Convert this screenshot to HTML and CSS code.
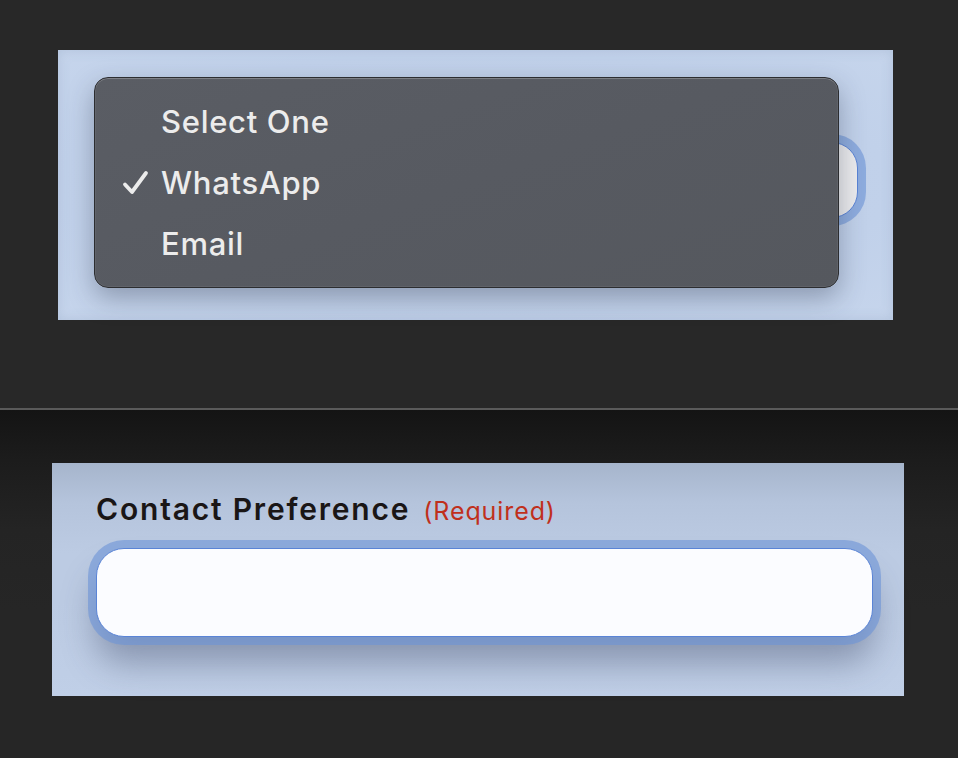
FILE: index.html
```html
<!DOCTYPE html>
<html>
<head>
<meta charset="utf-8">
<link rel="stylesheet" href="styles.css">
</head>
<body>
<section class="top">
  <div class="panel panel-top">
    <div class="field field-back"></div>
    <div class="menu">
      <div class="item"><span class="check"></span>Select One</div>
      <div class="item"><span class="check"><svg width="27" height="26" viewBox="0 0 27 26"><path d="M3 14.5 L10 22 L24 3" fill="none" stroke="#ececec" stroke-width="3.8" stroke-linecap="round" stroke-linejoin="round"/></svg></span>WhatsApp</div>
      <div class="item"><span class="check"></span>Email</div>
    </div>
  </div>
</section>
<div class="divider"></div>
<section class="bottom">
  <div class="panel panel-bottom">
    <div class="label-row">
      <span class="label">Contact Preference</span>
      <span class="req">(Required)</span>
    </div>
    <div class="field field-front"></div>
  </div>
</section>
</body>
</html>
```
FILE: styles.css
```css
* { box-sizing: border-box; }
html, body { margin: 0; padding: 0; }
body {
  background: #262626;
  font-family: Inter, "Noto Sans", "Liberation Sans", sans-serif;
  width: 958px;
  height: 758px;
  overflow: hidden;
}
.top {
  height: 408px;
  background: #282828;
  padding: 50px 0 0 58px;
}
.divider {
  height: 2px;
  background: #5a5a5a;
}
.bottom {
  height: 348px;
  background: linear-gradient(#141414 0px, #1c1c1c 50px, #242424 120px, #262626 200px);
  padding: 53px 0 0 52px;
}
.panel {
  position: relative;
}
.panel-top {
  width: 835px;
  height: 270px;
  background: radial-gradient(ellipse at 50% 50%, #bccbe3 0%, #c1d1ea 70%, #c6d5ec 100%);
  box-shadow: inset 0 0 12px rgba(120,140,170,.25);
}
.field {
  background: #fbfcff;
  border: 1.5px solid #5a84d6;
  box-shadow: 0 0 0 8px rgba(110,148,214,.62);
}
.field-back {
  position: absolute;
  left: 60px;
  right: 35px;
  top: 92px;
  height: 76px;
  border-radius: 26px;
  background: #ececee;
}
.menu {
  position: absolute;
  left: 36px;
  top: 27px;
  width: 745px;
  height: 211px;
  background: linear-gradient(160deg, #5a5d64 0%, #575a61 50%, #55585e 100%);
  border: 1px solid #2c2d30;
  border-radius: 14px;
  box-shadow: inset 0 1px 0 rgba(255,255,255,.18), inset 0 0 0 1px rgba(255,255,255,.06), 0 10px 26px rgba(40,50,70,.35);
  padding: 13px 0 0 27px;
}
.item {
  height: 61px;
  display: flex;
  align-items: center;
  color: #ececec;
  font-size: 31px;
  font-weight: 500;
  letter-spacing: 0.7px;
}
.check {
  width: 39px;
  display: flex;
  align-items: center;
}
.panel-bottom {
  width: 852px;
  height: 233px;
  background: linear-gradient(#a6b5cc 0px, #b5c4dc 40px, #bccbe3 90px, #bccbe3 140px, #c0cfe7 233px);
  padding: 28px 31px 0 44px;
}
.label-row {
  display: flex;
  align-items: baseline;
  gap: 13px;
  height: 38px;
}
.label {
  font-size: 30px;
  font-weight: 600;
  color: #1a1616;
  letter-spacing: 1.8px;
}
.req {
  font-size: 25px;
  color: #c0301c;
  letter-spacing: 0.9px;
}
.field-front {
  margin-top: 19px;
  width: 777px;
  height: 89px;
  border-radius: 28px;
  box-shadow: 0 0 0 8px rgba(110,148,214,.62), 0 26px 34px rgba(55,65,95,.4);
}
```
